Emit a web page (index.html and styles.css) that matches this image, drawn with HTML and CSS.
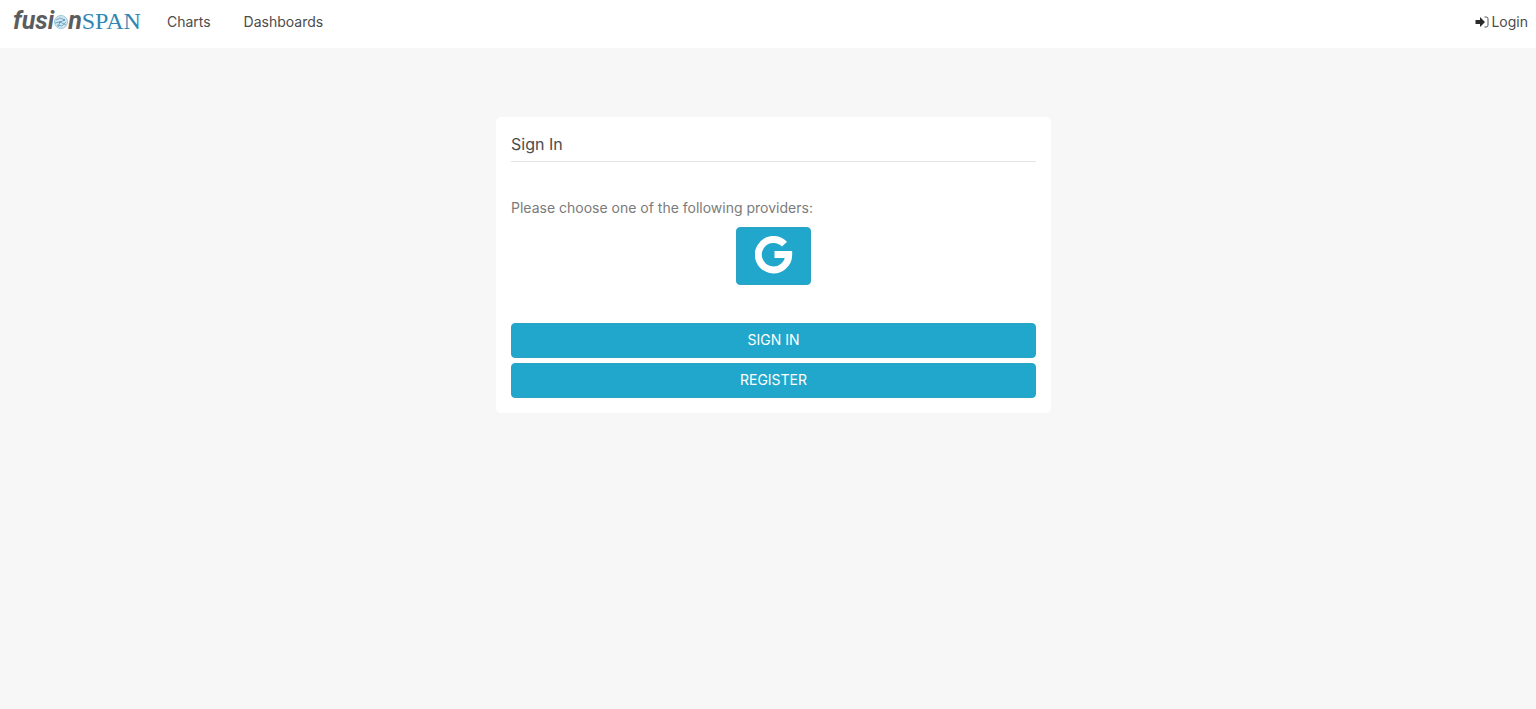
FILE: index.html
```html
<!DOCTYPE html>
<html lang="en">
<head>
    <meta charset="UTF-8">
    <meta name="viewport" content="width=device-width, initial-scale=1.0">
    <title>Sign In - fusionSPAN</title>
    <link rel="stylesheet" href="styles.css">
</head>
<body>
    <header class="navbar">
        <a class="logo" href="#" aria-label="fusionSPAN">
            <span class="logo-fusion">fusi</span>
            <svg class="logo-globe" viewBox="0 0 14 14" aria-hidden="true">
                <circle cx="7" cy="7" r="6.500" fill="#d3e7f0" stroke="#9cc4d7" stroke-width="1"/>
                <path d="M2 5l4-2 5 2M1 8l5-1 6 3M4 12l2-5 5-2M3 10l5 1 4-4" fill="none" stroke="#74aac4" stroke-width="1"/>
                <circle cx="6" cy="7" r="1" fill="#5a9dbd"/>
                <circle cx="10" cy="5" r="1" fill="#5a9dbd"/>
            </svg>
            <span class="logo-fusion">n</span>
            <span class="logo-span">SPAN</span>
        </a>
        <nav class="menu">
            <a href="#">Charts</a>
            <a href="#">Dashboards</a>
        </nav>
        <a class="login" href="#">
            <svg viewBox="0 0 14 12" aria-hidden="true">
                <path d="M0.500 4h4.500V1L10 6l-5 5V8H0.500z" fill="#2b2b2b"/>
                <path d="M9.500 1h1.700Q13 1 13 2.800v6.400Q13 11 11.200 11H9.500" fill="none" stroke="#555" stroke-width="1"/>
            </svg>
            Login
        </a>
    </header>

    <main class="content">
        <section class="card">
            <h1>Sign In</h1>
            <p>Please choose one of the following providers:</p>
            <button class="btn provider" type="button" aria-label="Google">
                <svg viewBox="0 0 38 38" aria-hidden="true">
                    <path d="M29.500 8.200A15.200 15.200 0 1 0 33.700 18.500H19.500" fill="none" stroke="#fff" stroke-width="7"/>
                </svg>
            </button>
            <div class="actions">
                <button class="btn" type="button">SIGN IN</button>
                <button class="btn" type="button">REGISTER</button>
            </div>
        </section>
    </main>
</body>
</html>
```
FILE: styles.css
```css
* {
    box-sizing: border-box;
}
body {
    margin: 0;
    background: #f7f7f7;
    color: #4c4c4c;
    font-family: Inter, "Liberation Sans", sans-serif;
    font-size: 14px;
    line-height: 20px;
}
a {
    color: inherit;
    text-decoration: none;
}
.navbar {
    display: flex;
    align-items: center;
    height: 48px;
    padding: 0 8px 4px 13px;
    background: #fff;
}
.logo {
    display: flex;
    align-items: baseline;
    padding-bottom: 2px;
    line-height: 28px;
}
.logo-fusion {
    color: #5b5c60;
    font-family: Roboto, sans-serif;
    font-size: 25px;
    font-weight: 700;
    font-style: italic;
}
.logo-globe {
    width: 14px;
    height: 14px;
}
.logo-span {
    color: #2f86b5;
    font-family: "Liberation Serif", serif;
    font-size: 24px;
}
.menu {
    display: flex;
    gap: 33px;
    margin-left: 26px;
}
.login {
    display: flex;
    align-items: center;
    gap: 2px;
    margin-left: auto;
}
.login svg {
    width: 14px;
    height: 12px;
}
.content {
    padding: 69px 0 40px 11px;
}
.card {
    max-width: 555px;
    margin: 0 auto;
    padding: 15px;
    background: #fff;
    border-radius: 5px;
}
.card h1 {
    margin: 0 0 36px;
    padding-bottom: 5px;
    border-bottom: 1px solid #e4e4e4;
    font-size: 16px;
    line-height: 24px;
    font-weight: 400;
}
.card p {
    margin: 0 0 9px;
    color: #7b7b7b;
}
.btn {
    display: block;
    width: 100%;
    height: 35px;
    padding: 0 0 2px;
    border: 1px solid #2ba3c5;
    border-radius: 4px;
    background: #22a7cc;
    color: #fff;
    font-family: inherit;
    font-size: 14px;
    cursor: pointer;
}
.btn:hover {
    background: #1d96b8;
}
.provider {
    width: 75px;
    height: 58px;
    margin: 0 auto 38px;
}
.provider svg {
    display: block;
    width: 38px;
    height: 38px;
    margin: 0 auto;
}
.actions {
    display: flex;
    flex-direction: column;
    gap: 5px;
}
```
